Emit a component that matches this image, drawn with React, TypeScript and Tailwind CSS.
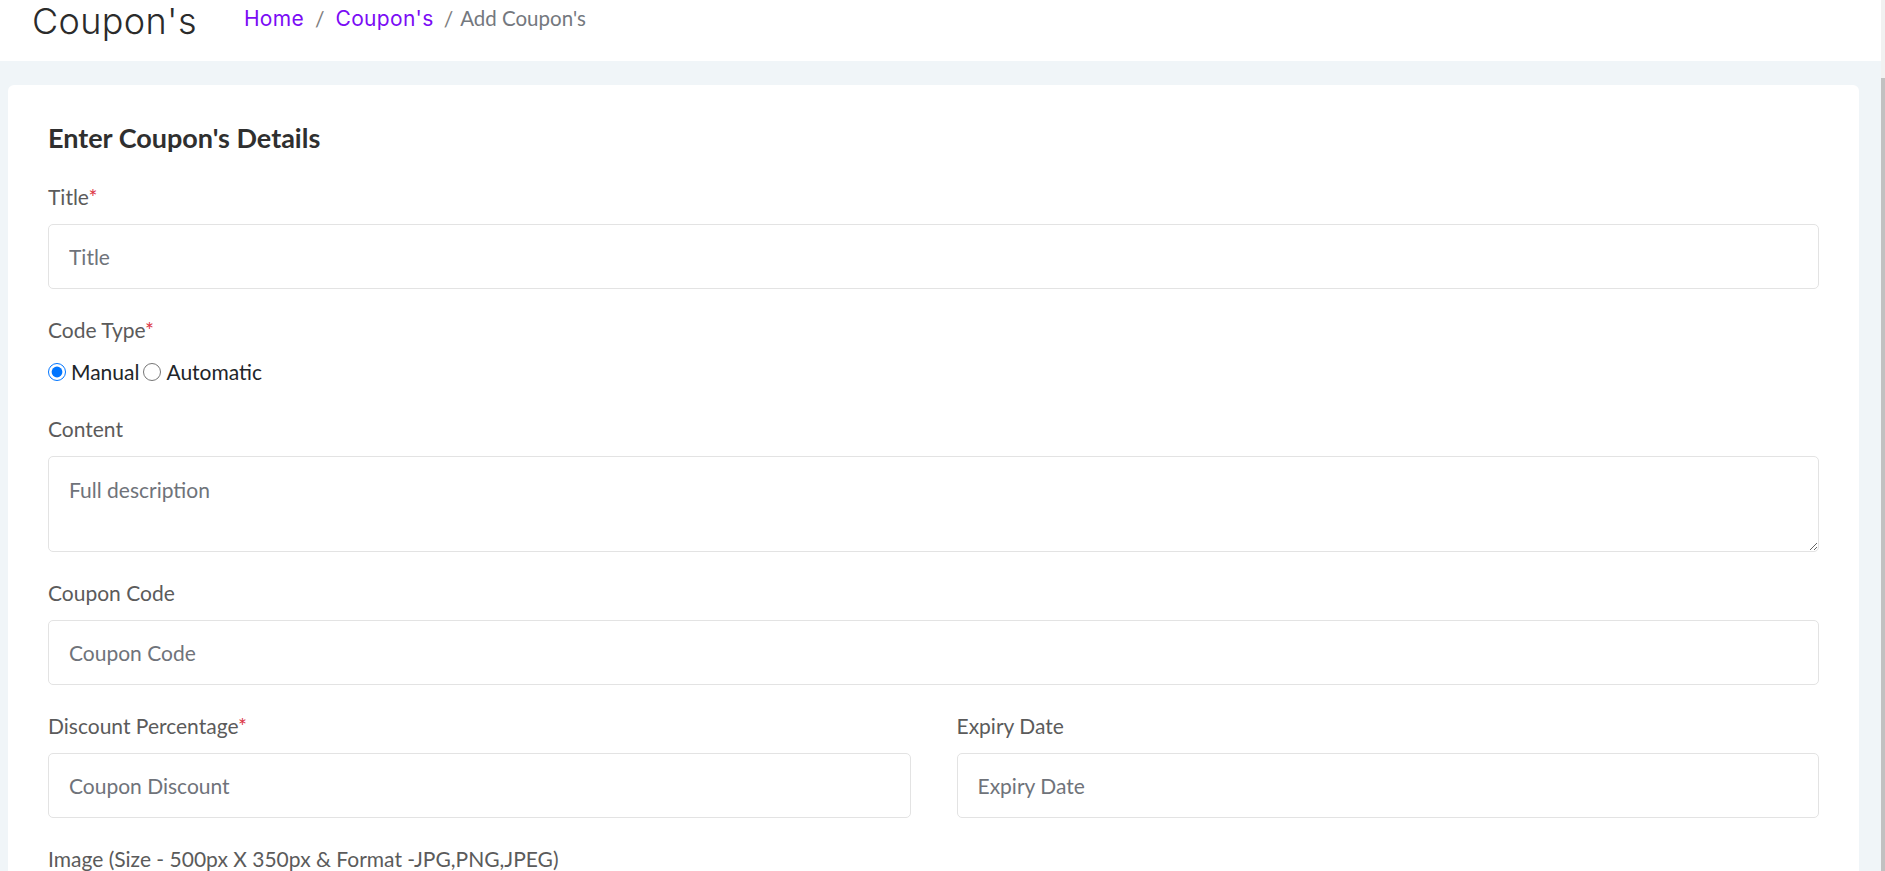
import React from "react"

const lato = { fontFamily: "Lato, 'Liberation Sans', sans-serif" }

function Label({ text, required }: { text: string; required?: boolean }) {
  return (
    <label className="block mb-3 text-[21px] leading-[30px] text-[#5b5b5b]">
      {text}
      {required && <span className="text-[#dc3545]">*</span>}
    </label>
  )
}

function TextInput({ placeholder }: { placeholder: string }) {
  return (
    <input
      type="text"
      placeholder={placeholder}
      className="block w-full h-[65px] px-5 text-[21px] leading-[30px] text-[#212529] bg-white border border-[#e3e3e3] rounded-[5px] outline-none placeholder:text-[#6f737a]"
    />
  )
}

export default function App() {
  return (
    <div className="flex h-screen overflow-hidden bg-white" style={lato}>
      <div className="flex-1 flex flex-col min-w-0">
        {/* Page header */}
        <header className="h-[61px] shrink-0 bg-white flex items-start pl-8 pt-[3px]">
          <h1 className="text-[36px] leading-9 font-light text-[#2b2b2b] tracking-[0.01em]" style={{ fontFamily: "Inter, 'Open Sans', sans-serif" }}>
            Coupon's
          </h1>
          <nav className="flex items-center ml-[47px] mt-[5px] text-[21px] leading-[21px]">
            <a className="text-[#7b0cf5] tracking-[0.015em]" style={{ fontFamily: "Inter, sans-serif" }}>Home</a>
            <span className="mx-[11px] text-[#7d7d7d]">/</span>
            <a className="text-[#7b0cf5] tracking-[0.015em]" style={{ fontFamily: "Inter, sans-serif" }}>Coupon's</a>
            <span className="ml-[10px] mr-[7px] text-[#7d7d7d]">/</span>
            <span className="text-[#74787e] text-[20.5px]">Add Coupon's</span>
          </nav>
        </header>

        {/* Content */}
        <main className="flex-1 bg-[#f0f5f8] pl-2 pr-[22px] pt-6">
          <div className="bg-white rounded-[6px] px-10 pt-[37px] pb-10">
            <h2 className="text-[27px] leading-[32px] font-bold text-[#2f2f2f] mb-[28px]">Enter Coupon's Details</h2>

            <div className="mb-[26px]">
              <Label text="Title" required />
              <TextInput placeholder="Title" />
            </div>

            <div className="mb-[27px]">
              <Label text="Code Type" required />
              <div className="flex items-center text-[21px] leading-[30px] text-[#212529]">
                <input type="radio" name="codeType" defaultChecked className="w-[18px] h-[18px] m-0 mr-[5px]" />
                <span>Manual</span>
                <input type="radio" name="codeType" className="w-[18px] h-[18px] m-0 ml-[4px] mr-[5px]" />
                <span>Automatic</span>
              </div>
            </div>

            <div className="mb-[26px]">
              <Label text="Content" />
              <textarea
                placeholder="Full description"
                className="block w-full h-[96px] px-5 pt-[18px] text-[21px] leading-[30px] bg-white border border-[#e3e3e3] rounded-[5px] outline-none placeholder:text-[#6f737a]"
              />
            </div>

            <div className="mb-[26px]">
              <Label text="Coupon Code" />
              <TextInput placeholder="Coupon Code" />
            </div>

            <div className="grid grid-cols-2 gap-x-[46px] mb-[26px]">
              <div>
                <Label text="Discount Percentage" required />
                <TextInput placeholder="Coupon Discount" />
              </div>
              <div>
                <Label text="Expiry Date" />
                <TextInput placeholder="Expiry Date" />
              </div>
            </div>

            <div className="mb-[26px]">
              <Label text="Image (Size - 500px X 350px & Format -JPG,PNG,JPEG)" />
              <div className="h-[65px] border border-[#e3e3e3] rounded-[5px]" />
            </div>
          </div>
        </main>
      </div>

      {/* scrollbar strip */}
      <div className="w-[4px] shrink-0 flex flex-col bg-[#f1f1f1]">
        <div className="h-[78px]" />
        <div className="flex-1 bg-[#c1c1c1]" />
      </div>
    </div>
  )
}
